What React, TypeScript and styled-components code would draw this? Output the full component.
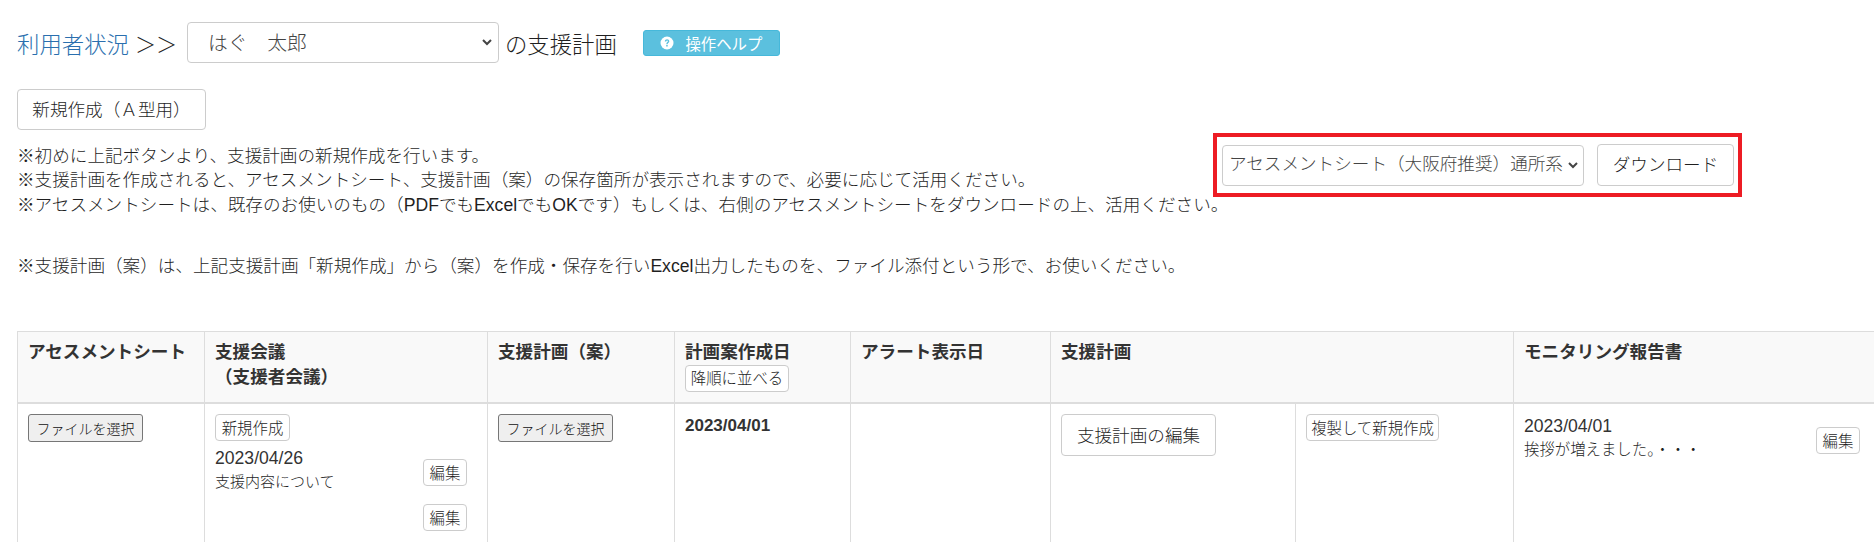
import styled, { createGlobalStyle } from "styled-components"

const Global = createGlobalStyle`
    html, body {
        margin: 0;
        overflow: hidden;
        background: #fff;
    }
    body {
        font-family: "Liberation Sans", "Noto Sans CJK JP", sans-serif;
        font-size: 17.6px;
        font-weight: 300;
        color: #1f1f1f;
    }
    button {
        font-weight: 300;
    }
`

const Page = styled.div`
    width: 1900px;
    height: 542px;
    padding: 22px 0 0 17px;
    box-sizing: border-box;
    overflow: hidden;
`

const TitleRow = styled.div`
    display: flex;
    align-items: center;
    height: 41px;
    font-size: 22.4px;
`

const TitleLink = styled.a`
    color: #2a6fae;
    text-decoration: none;
`

const Arrows = styled.span`
    margin: 0 10px 0 6px;
    font-size: 21px;
`

const UserSelect = styled.div`
    width: 312px;
    height: 41px;
    box-sizing: border-box;
    display: flex;
    align-items: center;
    justify-content: space-between;
    padding: 0 5px 2px 20px;
    margin-right: 6px;
    background: #fff;
    border: 1px solid #ccc;
    border-radius: 4px;
    color: #444;
    font-size: 19.8px;
`

const HelpButton = styled.button`
    margin-left: 26px;
    width: 137px;
    height: 26px;
    display: flex;
    align-items: center;
    justify-content: center;
    gap: 11px;
    padding: 0;
    background: #5bc0de;
    border: 1px solid #46b8da;
    border-radius: 3px;
    color: #fff;
    font-family: inherit;
    font-size: 15.4px;
    font-weight: 400;
`

const IntroRow = styled.div`
    display: flex;
    align-items: flex-start;
    margin-top: 26px;
`

const IntroLeft = styled.div`
    width: 1196px;
    flex: none;
`

const Note = styled.p<{ $top: number }>`
    margin: ${p => p.$top}px 0 0;
    font-size: 17.6px;
    line-height: 24.4px;
    white-space: nowrap;
`

const DownloadBox = styled.div`
    margin-top: 44px;
    width: 529px;
    height: 64px;
    box-sizing: border-box;
    display: flex;
    align-items: center;
    gap: 13px;
    padding-left: 5px;
    border: 4px solid #ed1c24;
`

const SheetSelect = styled(UserSelect)`
    width: 362px;
    margin: 0;
    padding: 0 4px 6px 6px;
    font-size: 17.6px;
    white-space: nowrap;
    overflow: hidden;
    svg {
        position: relative;
        top: 3px;
    }
`

const Button = styled.button<{ $w: number; $h: number; $size?: number; $lift?: number }>`
    width: ${p => p.$w}px;
    height: ${p => p.$h}px;
    flex: none;
    padding: 0 0 ${p => p.$lift ?? 2}px;
    background: #fff;
    border: 1px solid #ccc;
    border-radius: 4px;
    color: #1f1f1f;
    font-family: inherit;
    font-size: ${p => p.$size ?? 15.4}px;
    white-space: nowrap;
`

const FileButton = styled.button`
    width: 115px;
    height: 28px;
    padding: 0;
    background: #efefef;
    border: 1px solid #767676;
    border-radius: 3px;
    color: #111;
    font-family: inherit;
    font-size: 14px;
`

const Table = styled.table`
    margin-top: 52px;
    width: 1863px;
    height: 300px;
    table-layout: fixed;
    border-collapse: collapse;
`

const Th = styled.th`
    height: 72px;
    box-sizing: border-box;
    padding: 8px 10px 10px;
    background: #f9f9f9;
    border: 1px solid #ddd;
    border-bottom-width: 2px;
    font-size: 17.6px;
    font-weight: 700;
    line-height: 25px;
    color: #333;
    text-align: left;
    vertical-align: top;
    white-space: nowrap;
`

const Td = styled.td<{ $wide?: boolean }>`
    padding: 10px ${p => (p.$wide ? 20 : 10)}px 10px 10px;
    border: 1px solid #ddd;
    vertical-align: top;
`

const DateText = styled.div<{ $bold?: boolean }>`
    font-size: ${p => (p.$bold ? 17 : 17.6)}px;
    line-height: 24px;
    color: #333;
    font-weight: ${p => (p.$bold ? 700 : 300)};
`

const Memo = styled.div<{ $size?: number }>`
    font-size: ${p => p.$size ?? 15}px;
    line-height: 24px;
`

const RecordRow = styled.div<{ $top: number }>`
    display: flex;
    align-items: flex-start;
    justify-content: space-between;
    margin-top: ${p => p.$top}px;
`

const RightAlign = styled.div`
    display: flex;
    justify-content: flex-end;
    margin-top: 10px;
`

const EditOffset = styled.div`
    margin-top: 13px;
`

const colWidths = [187, 283, 187, 176, 200, 245, 218, 367]

function Chevron() {
    return (
        <svg width="12" height="12" viewBox="0 0 12 12" fill="none" stroke="#444" strokeWidth="2">
            <path d="M2 4l4 4 4-4" />
        </svg>
    )
}

function QuestionIcon() {
    return (
        <svg width="14" height="14" viewBox="0 0 14 14">
            <circle cx="7" cy="7" r="6.5" fill="#fff" />
            <path d="M4.8 5.4c0-2.9 4.5-2.9 4.5-.2 0 1.7-1.7 1.6-1.7 3H6.3c0-2.2 1.6-2 1.6-3 0-.9-1.6-.9-1.7.2z" fill="#5bc0de" />
            <rect x="6.2" y="9" width="1.5" height="1.5" fill="#5bc0de" />
        </svg>
    )
}

export default function App() {
    return <>
        <Global />
        <Page>
            <TitleRow>
                <TitleLink href="#">利用者状況</TitleLink>
                <Arrows>＞＞</Arrows>
                <UserSelect>はぐ　太郎<Chevron /></UserSelect>
                の支援計画
                <HelpButton><QuestionIcon />操作ヘルプ</HelpButton>
            </TitleRow>

            <IntroRow>
                <IntroLeft>
                    <Button $w={189} $h={41} $size={17.6}>新規作成（Ａ型用）</Button>
                    <Note $top={14}>
                        ※初めに上記ボタンより、支援計画の新規作成を行います。<br />
                        ※支援計画を作成されると、アセスメントシート、支援計画（案）の保存箇所が表示されますので、必要に応じて活用ください。<br />
                        ※アセスメントシートは、既存のお使いのもの（PDFでもExcelでもOKです）もしくは、右側のアセスメントシートをダウンロードの上、活用ください。
                    </Note>
                    <Note $top={37}>※支援計画（案）は、上記支援計画「新規作成」から（案）を作成・保存を行いExcel出力したものを、ファイル添付という形で、お使いください。</Note>
                </IntroLeft>
                <DownloadBox>
                    <SheetSelect>アセスメントシート（大阪府推奨）通所系<Chevron /></SheetSelect>
                    <Button $w={137} $h={42} $size={17.6} $lift={4}>ダウンロード</Button>
                </DownloadBox>
            </IntroRow>

            <Table>
                <colgroup>
                    {colWidths.map((w, i) => <col key={i} width={w} />)}
                </colgroup>
                <thead>
                    <tr>
                        <Th>アセスメントシート</Th>
                        <Th>支援会議<br />（支援者会議）</Th>
                        <Th>支援計画（案）</Th>
                        <Th>計画案作成日<br /><Button $w={104} $h={27}>降順に並べる</Button></Th>
                        <Th>アラート表示日</Th>
                        <Th colSpan={2}>支援計画</Th>
                        <Th>モニタリング報告書</Th>
                    </tr>
                </thead>
                <tbody>
                    <tr>
                        <Td><FileButton>ファイルを選択</FileButton></Td>
                        <Td $wide>
                            <Button $w={75} $h={27}>新規作成</Button>
                            <RecordRow $top={5}>
                                <div>
                                    <DateText>2023/04/26</DateText>
                                    <Memo>支援内容について</Memo>
                                </div>
                                <EditOffset><Button $w={44} $h={27}>編集</Button></EditOffset>
                            </RecordRow>
                            <RightAlign><Button $w={44} $h={27}>編集</Button></RightAlign>
                        </Td>
                        <Td><FileButton>ファイルを選択</FileButton></Td>
                        <Td><DateText $bold>2023/04/01</DateText></Td>
                        <Td></Td>
                        <Td><Button $w={155} $h={42} $size={17.6}>支援計画の編集</Button></Td>
                        <Td><Button $w={133} $h={27}>複製して新規作成</Button></Td>
                        <Td $wide>
                            <RecordRow $top={0}>
                                <div>
                                    <DateText>2023/04/01</DateText>
                                    <Memo $size={15.4}>挨拶が増えました。・・・</Memo>
                                </div>
                                <EditOffset><Button $w={44} $h={27}>編集</Button></EditOffset>
                            </RecordRow>
                        </Td>
                    </tr>
                </tbody>
            </Table>
        </Page>
    </>
}
